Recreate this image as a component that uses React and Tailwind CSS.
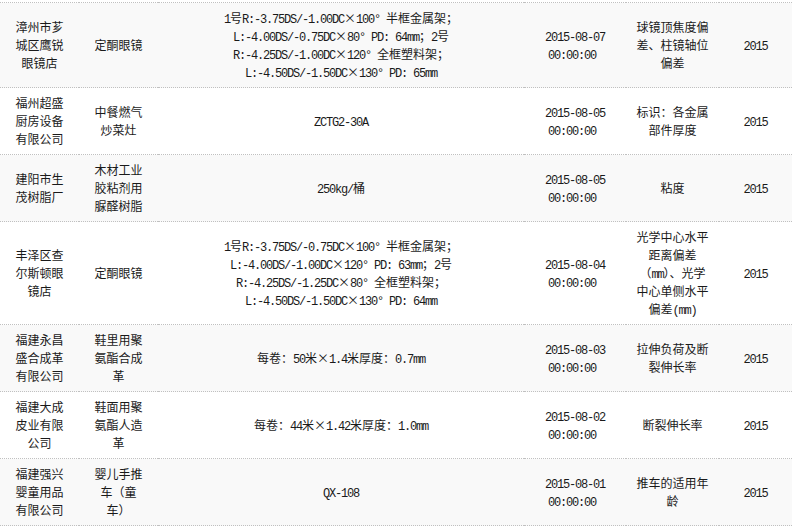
import React from 'react';

const MONO = /^[\x20-\x7e\u00b0\u00a0]+$/;

function T({ s }) {
  const parts = s.match(/[\x20-\x7e\u00b0\u00a0]+|×|[^\x20-\x7e\u00b0\u00a0×]+/g) || [];
  return (
    <>
      {parts.map((p, i) => {
        if (p === '×')
          return (
            <span key={i} className="inline-block w-[12px] text-center">
              ×
            </span>
          );
        if (MONO.test(p))
          return (
            <span key={i} className="font-['Liberation_Mono',monospace] tracking-[-1.2px] whitespace-pre">
              {p}
            </span>
          );
        return <span key={i}>{p}</span>;
      })}
    </>
  );
}

function Lines({ lines }) {
  return (
    <>
      {lines.map((l, i) => (
        <div key={i} className="h-[18px] leading-[18px] whitespace-nowrap">
          <T s={l} />
        </div>
      ))}
    </>
  );
}

const rows = [
  {
    c1: ['漳州市芗', '城区鹰锐', '眼镜店'],
    c2: ['定酮眼镜'],
    c3: [
      '1号R:-3.75DS/-1.00DC×100° 半框金属架；',
      'L:-4.00DS/-0.75DC×80° PD: 64mm；2号',
      'R:-4.25DS/-1.00DC×120° 全框塑料架；',
      'L:-4.50DS/-1.50DC×130° PD: 65mm',
    ],
    date: '2015-08-07',
    c5: ['球镜顶焦度偏', '差、柱镜轴位', '偏差'],
  },
  {
    c1: ['福州超盛', '厨房设备', '有限公司'],
    c2: ['中餐燃气', '炒菜灶'],
    c3: ['ZCTG2-30A'],
    date: '2015-08-05',
    c5: ['标识：各金属', '部件厚度'],
  },
  {
    c1: ['建阳市生', '茂树脂厂'],
    c2: ['木材工业', '胶粘剂用', '脲醛树脂'],
    c3: ['250kg/桶'],
    date: '2015-08-05',
    c5: ['粘度'],
  },
  {
    c1: ['丰泽区查', '尔斯顿眼', '镜店'],
    c2: ['定酮眼镜'],
    c3: [
      '1号R:-3.75DS/-0.75DC×100° 半框金属架；',
      'L:-4.00DS/-1.00DC×120° PD: 63mm；2号',
      'R:-4.25DS/-1.25DC×80° 全框塑料架；',
      'L:-4.50DS/-1.50DC×130° PD: 64mm',
    ],
    date: '2015-08-04',
    c5: ['光学中心水平', '距离偏差', '（mm）、光学', '中心单侧水平', '偏差(mm)'],
  },
  {
    c1: ['福建永昌', '盛合成革', '有限公司'],
    c2: ['鞋里用聚', '氨酯合成', '革'],
    c3: ['每卷：50米×1.4米厚度：0.7mm'],
    date: '2015-08-03',
    c5: ['拉伸负荷及断', '裂伸长率'],
  },
  {
    c1: ['福建大成', '皮业有限', '公司'],
    c2: ['鞋面用聚', '氨酯人造', '革'],
    c3: ['每卷：44米×1.42米厚度：1.0mm'],
    date: '2015-08-02',
    c5: ['断裂伸长率'],
  },
  {
    c1: ['福建强兴', '婴童用品', '有限公司'],
    c2: ['婴儿手推', '车（童', '车）'],
    c3: ['QX-108'],
    date: '2015-08-01',
    c5: ['推车的适用年', '龄'],
  },
];

export default function App() {
  const td = 'border-t border-dotted border-[#c0c0c0] py-[6px] px-0 text-center align-middle';
  return (
    <div className="w-[796px] h-[529px] bg-white overflow-hidden pt-[2px] text-[12px] leading-[18px] text-[#1a1a1a] font-['Noto_Sans_CJK_SC',sans-serif]">
      <table className="w-[792px] table-fixed border-collapse">
        <colgroup>
          <col className="w-[79px]" />
          <col className="w-[79px]" />
          <col className="w-[366px]" />
          <col className="w-[102px]" />
          <col className="w-[93px]" />
          <col className="w-[73px]" />
        </colgroup>
        <tbody>
          {rows.map((r, i) => {
            const last = i === rows.length - 1;
            const cls = td + (last ? ' border-b' : '');
            return (
              <tr key={i} className={i % 2 === 0 ? 'bg-[#f9f9f9]' : 'bg-white'}>
                <td className={cls}>
                  <Lines lines={r.c1} />
                </td>
                <td className={cls}>
                  <Lines lines={r.c2} />
                </td>
                <td className={cls}>
                  <Lines lines={r.c3} />
                </td>
                <td className={cls}>
                  <Lines lines={[r.date, '00:00:00\u00a0']} />
                </td>
                <td className={cls}>
                  <Lines lines={r.c5} />
                </td>
                <td className={cls}>
                  <Lines lines={['2015']} />
                </td>
              </tr>
            );
          })}
        </tbody>
      </table>
    </div>
  );
}
